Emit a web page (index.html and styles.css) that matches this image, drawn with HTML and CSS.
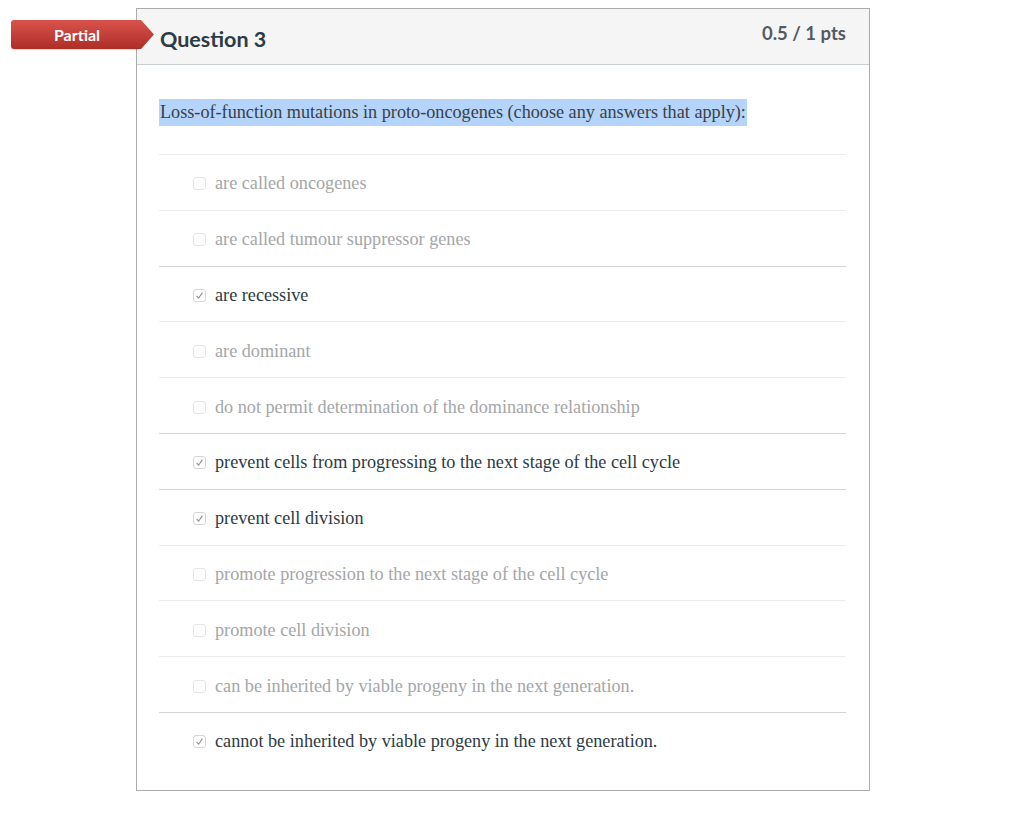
FILE: index.html
```html
<!DOCTYPE html>
<html lang="en">
<head>
<meta charset="utf-8">
<title>Question 3</title>
<link rel="stylesheet" href="styles.css">
</head>
<body>
<div class="page">
  <div class="question">
    <div class="badge">
      <span class="badge-label">Partial</span>
      <svg class="badge-tip" width="15" height="29" viewBox="0 0 15 29" aria-hidden="true">
        <defs>
          <linearGradient id="tipfill" x1="0" y1="0" x2="0" y2="1">
            <stop offset="0" stop-color="#d9534c"/>
            <stop offset="1" stop-color="#ad2e27"/>
          </linearGradient>
        </defs>
        <polygon points="0,0 2,0 15,14.5 2,29 0,29" fill="url(#tipfill)"/>
      </svg>
    </div>
    <div class="question-header">
      <h2 class="question-title">Question 3</h2>
      <div class="question-points">0.5 / 1 pts</div>
    </div>
    <div class="question-body">
      <p class="question-text"><span class="selected-text">Loss-of-function mutations in proto-oncogenes (choose any answers that apply):</span></p>
      <ul class="answers">
        <li class="answer"><span class="box"></span><span class="label">are called oncogenes</span></li>
        <li class="answer"><span class="box"></span><span class="label">are called tumour suppressor genes</span></li>
        <li class="answer chosen"><span class="box"><svg viewBox="0 0 13 13" width="13" height="13"><path d="M3.6 6.9 L5.6 9.2 L9.4 3.6" fill="none" stroke="#8e8e8e" stroke-width="1.1"/></svg></span><span class="label">are recessive</span></li>
        <li class="answer"><span class="box"></span><span class="label">are dominant</span></li>
        <li class="answer"><span class="box"></span><span class="label">do not permit determination of the dominance relationship</span></li>
        <li class="answer chosen"><span class="box"><svg viewBox="0 0 13 13" width="13" height="13"><path d="M3.6 6.9 L5.6 9.2 L9.4 3.6" fill="none" stroke="#8e8e8e" stroke-width="1.1"/></svg></span><span class="label">prevent cells from progressing to the next stage of the cell cycle</span></li>
        <li class="answer chosen"><span class="box"><svg viewBox="0 0 13 13" width="13" height="13"><path d="M3.6 6.9 L5.6 9.2 L9.4 3.6" fill="none" stroke="#8e8e8e" stroke-width="1.1"/></svg></span><span class="label">prevent cell division</span></li>
        <li class="answer"><span class="box"></span><span class="label">promote progression to the next stage of the cell cycle</span></li>
        <li class="answer"><span class="box"></span><span class="label">promote cell division</span></li>
        <li class="answer"><span class="box"></span><span class="label">can be inherited by viable progeny in the next generation.</span></li>
        <li class="answer chosen"><span class="box"><svg viewBox="0 0 13 13" width="13" height="13"><path d="M3.6 6.9 L5.6 9.2 L9.4 3.6" fill="none" stroke="#8e8e8e" stroke-width="1.1"/></svg></span><span class="label">cannot be inherited by viable progeny in the next generation.</span></li>
      </ul>
    </div>
  </div>
</div>
</body>
</html>
```

FILE: styles.css
```css
html, body {
  margin: 0;
  padding: 0;
  background: #ffffff;
}

.page {
  padding: 8px 0 0 136px;
}

.question {
  position: relative;
  width: 732px;
  border: 1px solid #a9abad;
  background: #ffffff;
}

/* status ribbon sitting over the left edge of the card */
.badge {
  position: absolute;
  left: -126px;
  top: 11px;
  display: flex;
  height: 29px;
}

.badge-label {
  width: 128px;
  height: 29px;
  box-sizing: border-box;
  padding-left: 4px;
  border-radius: 3px 0 0 3px;
  background: linear-gradient(#d9534c, #ad2e27);
  box-shadow: 0 1px 1px rgba(0, 0, 0, 0.15);
  color: #ffffff;
  font-family: Lato, "Liberation Sans", sans-serif;
  font-weight: 700;
  font-size: 16px;
  line-height: 29px;
  text-align: center;
}

.badge-tip {
  display: block;
}

.question-header {
  display: flex;
  justify-content: space-between;
  align-items: flex-start;
  height: 55px;
  padding: 0 23px;
  background: #f5f5f5;
  border-bottom: 1px solid #c7cdd1;
}

.question-title {
  margin: 0;
  padding-top: 17px;
  color: #2d3b45;
  font-family: Lato, "Liberation Sans", sans-serif;
  font-weight: 700;
  font-size: 21.5px;
  line-height: 26px;
}

.question-points {
  padding-top: 12px;
  color: #555a5e;
  font-family: Lato, "Liberation Sans", sans-serif;
  font-weight: 700;
  font-size: 18.5px;
  line-height: 24px;
}

.question-body {
  padding: 34px 23px 22px 22px;
}

.question-text {
  margin: 0 0 28px 0;
  font-family: "Liberation Serif", "Times New Roman", serif;
  font-size: 18.2px;
  color: #3b4046;
  line-height: 27px;
}

.selected-text {
  display: inline-block;
  padding: 0 1px;
  background: #b4d4fb;
}

.answers {
  list-style: none;
  margin: 0;
  padding: 0;
}

.answer {
  display: flex;
  align-items: center;
  box-sizing: border-box;
  height: 55.8px;
  padding-left: 34px;
  padding-top: 3px;
  border-top: 1px solid #ececec;
  font-family: "Liberation Serif", "Times New Roman", serif;
  font-size: 18.2px;
  color: #a4a6a8;
}

.answer.chosen {
  border-top-color: #d3d5d7;
  color: #2d3b45;
}

.box {
  flex: none;
  width: 13px;
  height: 13px;
  box-sizing: border-box;
  margin-right: 9px;
  border: 1px solid #e4e4e4;
  border-radius: 3px;
  position: relative;
}

.answer.chosen .box {
  border-color: #d6d6d6;
}

.box svg {
  position: absolute;
  left: -1px;
  top: -1px;
}
```
